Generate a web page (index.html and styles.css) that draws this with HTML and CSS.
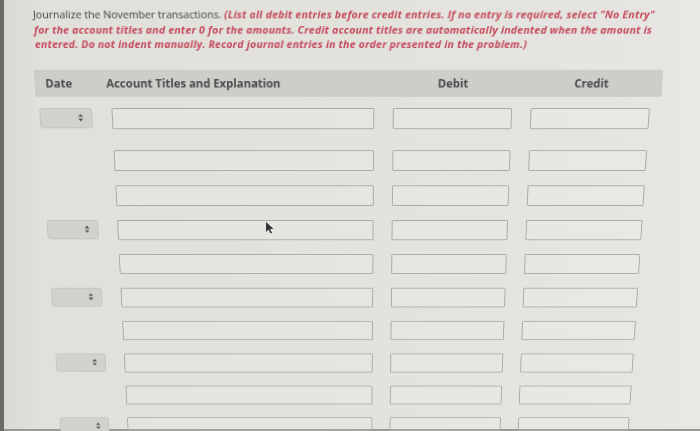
FILE: index.html
```html
<!DOCTYPE html>
<html lang="en">
<head>
    <meta charset="UTF-8">
    <meta name="viewport" content="width=device-width, initial-scale=1.0">
    <title>Journal entries</title>
    <link rel="stylesheet" href="styles.css">
</head>
<body>

    <div class="question">
        <p class="prompt">Journalize the November transactions. <em class="hint">(List all debit entries before credit entries. If no entry is required, select "No Entry"<br>
            for the account titles and enter 0 for the amounts. Credit account titles are automatically indented when the amount is<br>
            entered. Do not indent manually. Record journal entries in the order presented in the problem.)</em></p>

        <div class="journal">
            <div class="journal-head">
                <span class="head-date">Date</span>
                <span class="head-account">Account Titles and Explanation</span>
                <span class="head-amount">Debit</span>
                <span class="head-amount">Credit</span>
            </div>

            <div class="journal-row first">
                <div class="date-select"><svg width="6" height="9" viewBox="0 0 6 9"><path d="M3 0.5L5.5 3.5H0.5Z M3 8.5L5.5 5.5H0.5Z"/></svg></div>
                <input class="account" type="text">
                <input class="amount" type="text">
                <input class="amount" type="text">
            </div>
            <div class="journal-row">
                <div></div>
                <input class="account" type="text">
                <input class="amount" type="text">
                <input class="amount" type="text">
            </div>
            <div class="journal-row">
                <div></div>
                <input class="account" type="text">
                <input class="amount" type="text">
                <input class="amount" type="text">
            </div>
            <div class="journal-row">
                <div class="date-select"><svg width="6" height="9" viewBox="0 0 6 9"><path d="M3 0.5L5.5 3.5H0.5Z M3 8.5L5.5 5.5H0.5Z"/></svg></div>
                <input class="account" type="text">
                <input class="amount" type="text">
                <input class="amount" type="text">
            </div>
            <div class="journal-row">
                <div></div>
                <input class="account" type="text">
                <input class="amount" type="text">
                <input class="amount" type="text">
            </div>
            <div class="journal-row">
                <div class="date-select"><svg width="6" height="9" viewBox="0 0 6 9"><path d="M3 0.5L5.5 3.5H0.5Z M3 8.5L5.5 5.5H0.5Z"/></svg></div>
                <input class="account" type="text">
                <input class="amount" type="text">
                <input class="amount" type="text">
            </div>
            <div class="journal-row">
                <div></div>
                <input class="account" type="text">
                <input class="amount" type="text">
                <input class="amount" type="text">
            </div>
            <div class="journal-row">
                <div class="date-select"><svg width="6" height="9" viewBox="0 0 6 9"><path d="M3 0.5L5.5 3.5H0.5Z M3 8.5L5.5 5.5H0.5Z"/></svg></div>
                <input class="account" type="text">
                <input class="amount" type="text">
                <input class="amount" type="text">
            </div>
            <div class="journal-row">
                <div></div>
                <input class="account" type="text">
                <input class="amount" type="text">
                <input class="amount" type="text">
            </div>
            <div class="journal-row">
                <div class="date-select"><svg width="6" height="9" viewBox="0 0 6 9"><path d="M3 0.5L5.5 3.5H0.5Z M3 8.5L5.5 5.5H0.5Z"/></svg></div>
                <input class="account" type="text">
                <input class="amount" type="text">
                <input class="amount" type="text">
            </div>
        </div>
    </div>

    <!-- mouse pointer left on the screen -->
    <svg class="pointer" width="9" height="13" viewBox="0 0 9 13"><path d="M1 1L1 11L3.5 8.5L5.5 12.5L7 11.8L5 8H8.5Z"/></svg>

</body>
</html>
```

FILE: styles.css
```css
* {
    margin: 0;
    padding: 0;
    box-sizing: border-box;
}

body {
    font-family: 'Open Sans', 'Noto Sans', sans-serif;
    width: 700px;
    height: 431px;
    overflow: hidden;
    position: relative;
    background:
        linear-gradient(to right, #6c6b68 0, #6c6b68 4px, transparent 4px),
        linear-gradient(to bottom, transparent 429px, #9a9995 429px),
        linear-gradient(to right, #d9d8d3 0, #e1e0db 40px, #e3e2dd 55%, #e6e5e1 92%, #e9e8e5 100%);
}

/* the photo was taken at an angle, so the whole page is tilted back */
.question {
    padding: 8px 0 0 29px;
    transform-origin: 345px 0;
    transform: perspective(1200px) rotateX(-14.2deg);
}

.prompt {
    width: 660px;
    padding-left: 3px;
    font-size: 10.6px;
    line-height: 15.5px;
    white-space: nowrap;
    color: #3f3f3f;
}

.hint {
    font-weight: 700;
    letter-spacing: 0.2px;
    color: #c4495c;
}

.journal {
    width: 639px;
    margin-top: 18px;
}

.journal-head,
.journal-row {
    display: grid;
    grid-template-columns: 58px 269px 122px 122px;
    column-gap: 19px;
    padding-right: 11px;
}

.journal-head {
    height: 29px;
    align-items: center;
    background-color: #cdcdca;
    font-size: 11.5px;
    font-weight: 700;
    color: #4a4a4a;
}

.head-date {
    padding-left: 11px;
}

.head-account {
    margin-left: -4px;
}

.head-amount {
    text-align: center;
}

.journal-row {
    height: 23px;
    margin-top: 16px;
}

.journal-row.first {
    margin-top: 12px;
    margin-bottom: 23px;
}

.account,
.amount {
    height: 23px;
    border: 1px solid #a9a9a4;
    border-radius: 1px;
    background-color: rgba(255, 255, 255, 0.12);
}

.date-select {
    width: 54px;
    height: 22px;
    margin-left: 3px;
    display: flex;
    justify-content: flex-end;
    align-items: center;
    padding-right: 8px;
    border: 1px solid #c3c3bf;
    border-radius: 3px;
    background-color: #d1d1cd;
}

.date-select svg {
    fill: #555;
}

.pointer {
    position: absolute;
    left: 265px;
    top: 221px;
    fill: #333;
}
```
